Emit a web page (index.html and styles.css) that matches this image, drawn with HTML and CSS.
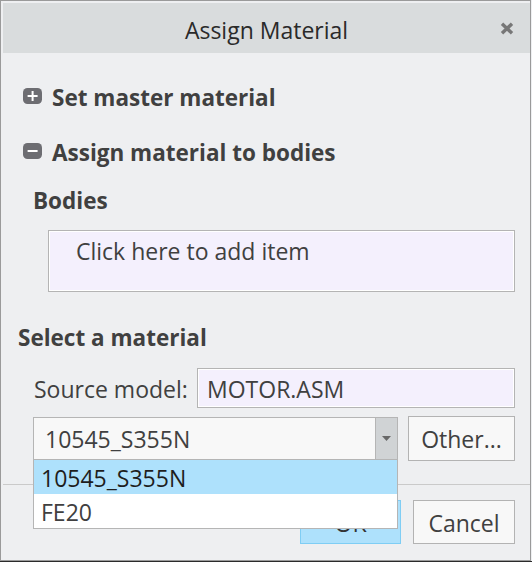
FILE: index.html
```html
<!DOCTYPE html>
<html lang="en">
<head>
<meta charset="utf-8">
<title>Assign Material</title>
<link rel="stylesheet" href="styles.css">
</head>
<body>
<div class="window">
  <div class="titlebar">
    <span class="spacer"></span>
    <div class="title">Assign Material</div>
    <button class="close" aria-label="Close">
      <svg width="14" height="13" viewBox="0 0 14 13"><path d="M2 1.8 L12 11.2 M12 1.8 L2 11.2" stroke="#777" stroke-width="3.4" fill="none"/></svg>
    </button>
  </div>

  <div class="content">
    <div class="section-head first">
      <svg class="toggle" width="19" height="16" viewBox="0 0 19 16"><rect x="0" y="0" width="19" height="16" rx="4.5" fill="#6d6d72"/><path d="M4.6 8 H14.6 M9.6 3 V13" stroke="#fff" stroke-width="2"/></svg>
      <span>Set master material</span>
    </div>
    <div class="section-head second">
      <svg class="toggle" width="19" height="16" viewBox="0 0 19 16"><rect x="0" y="0" width="19" height="16" rx="4.5" fill="#6d6d72"/><path d="M4.6 8 H14.6" stroke="#fff" stroke-width="2"/></svg>
      <span>Assign material to bodies</span>
    </div>
    <div class="sub-label">Bodies</div>
    <div class="collector">Click here to add item</div>

    <div class="group-label">Select a material</div>
    <div class="source-row">
      <span class="source-label">Source model:</span>
      <div class="field">MOTOR.ASM</div>
    </div>
    <div class="material-row">
      <div class="combo">
        <div class="combo-value">10545_S355N</div>
        <div class="combo-arrow">
          <svg width="9" height="5" viewBox="0 0 9 5"><path d="M0 0 H9 L4.5 5 Z" fill="#686868"/></svg>
        </div>
        <ul class="dropdown">
          <li class="selected">10545_S355N</li>
          <li>FE20</li>
        </ul>
      </div>
      <button class="btn other">Other...</button>
    </div>
  </div>

  <div class="footer">
    <button class="btn primary">OK</button>
    <button class="btn cancel">Cancel</button>
  </div>
</div>
</body>
</html>
```

FILE: styles.css
```css
* { box-sizing: border-box; }
html, body { margin: 0; padding: 0; }
body {
  width: 532px;
  height: 562px;
  overflow: hidden;
  background: linear-gradient(#eeeff1 561px, #2b2b2b 561px);
  font-family: "Open Sans", "Noto Sans", sans-serif;
  color: #404040;
}
.window {
  width: 531px;
  height: 561px;
  border: 1px solid #9a9a9a;
  background: #eeeff1;
  display: flex;
  flex-direction: column;
}
.titlebar {
  margin: 2px 0 0 2px;
  height: 50px;
  background: #d9dcdd;
  display: grid;
  grid-template-columns: 1fr auto 1fr;
  align-items: start;
}
.title {
  font-size: 23px;
  line-height: 46px;
  padding-top: 4px;
  color: #2a2a2a;
  white-space: nowrap;
}
.close {
  justify-self: end;
  margin: 19px 16px 0 0;
  padding: 0;
  border: 0;
  background: none;
  width: 14px;
  height: 13px;
  display: block;
}
.close svg { display: block; }

.content {
  padding: 0 15px 0 0;
}
.section-head {
  display: flex;
  margin-left: 22px;
  font-weight: 700;
  font-size: 22.5px;
  line-height: 30px;
  color: #404040;
}
.section-head.first { margin-top: 30px; }
.section-head.second { margin-top: 25px; }
.toggle {
  flex: none;
  margin: 5px 10px 0 0;
}
.sub-label {
  margin: 18px 0 0 32px;
  font-weight: 700;
  font-size: 22.5px;
  line-height: 30px;
  color: #404040;
}
.collector {
  margin: 14px 0 0 47px;
  height: 62px;
  border: 1px solid #b4b4b4;
  box-shadow: inset 0 0 0 1px #fff;
  background: #f4f0fd;
  padding: 5px 0 0 27px;
  font-size: 23px;
  line-height: 30px;
}
.group-label {
  margin: 31px 0 0 17px;
  font-weight: 700;
  font-size: 22.5px;
  line-height: 30px;
  color: #404040;
}
.source-row {
  display: flex;
  align-items: center;
  margin: 15px 0 0 33px;
  height: 40px;
}
.source-label {
  flex: none;
  width: 163px;
  font-size: 23px;
  line-height: 37px;
  padding-top: 3px;
  white-space: nowrap;
}
.field {
  flex: 1;
  height: 40px;
  border: 1px solid #b4b4b4;
  box-shadow: inset 0 0 0 1px #fff;
  background: #f4f0fd;
  padding: 3px 0 0 9px;
  font-size: 23px;
  line-height: 34px;
}
.material-row {
  display: flex;
  align-items: center;
  margin: 8px 0 0 32px;
  height: 45px;
}
.combo {
  position: relative;
  flex: none;
  width: 365px;
  height: 43px;
  border: 1px solid #b5b5b5;
  background: #f8f8f8;
  display: flex;
}
.combo-value {
  flex: 1;
  padding: 2px 0 0 11px;
  font-size: 23px;
  line-height: 39px;
}
.combo-arrow {
  flex: none;
  width: 22px;
  border-left: 1px solid #b5b5b5;
  background: #d0d3d5;
  display: flex;
  align-items: center;
  justify-content: center;
}
.combo-arrow svg { display: block; }
.dropdown {
  position: absolute;
  left: -1px;
  top: 41px;
  width: 365px;
  margin: 0;
  padding: 0;
  list-style: none;
  border: 1px solid #b5b5b5;
  background: #fff;
  z-index: 5;
}
.dropdown li {
  height: 34px;
  padding-left: 7px;
  font-size: 23px;
  line-height: 36px;
  color: #404040;
}
.dropdown li.selected {
  background: #aee1fc;
  color: #1e1e1e;
}
.btn {
  font-family: inherit;
  font-size: 23px;
  color: #404040;
  background: #f8f8f8;
  border: 1px solid #b3b3b3;
  padding: 3px 0 0 0;
  margin: 0;
  line-height: 39px;
  text-align: center;
}
.other {
  flex: none;
  width: 107px;
  height: 45px;
  margin-left: 10px;
  padding-top: 2px;
  line-height: 41px;
}
.footer {
  margin: 23px 0 0 2px;
  border-top: 1px solid #cacaca;
  padding: 15px 15px 0 0;
  display: flex;
  justify-content: flex-end;
  gap: 12px;
}
.footer .btn { height: 44px; }
.primary {
  width: 101px;
  background: #aee1fc;
  border-color: #7fcdf4;
  color: #333;
}
.cancel { width: 102px; }
```
